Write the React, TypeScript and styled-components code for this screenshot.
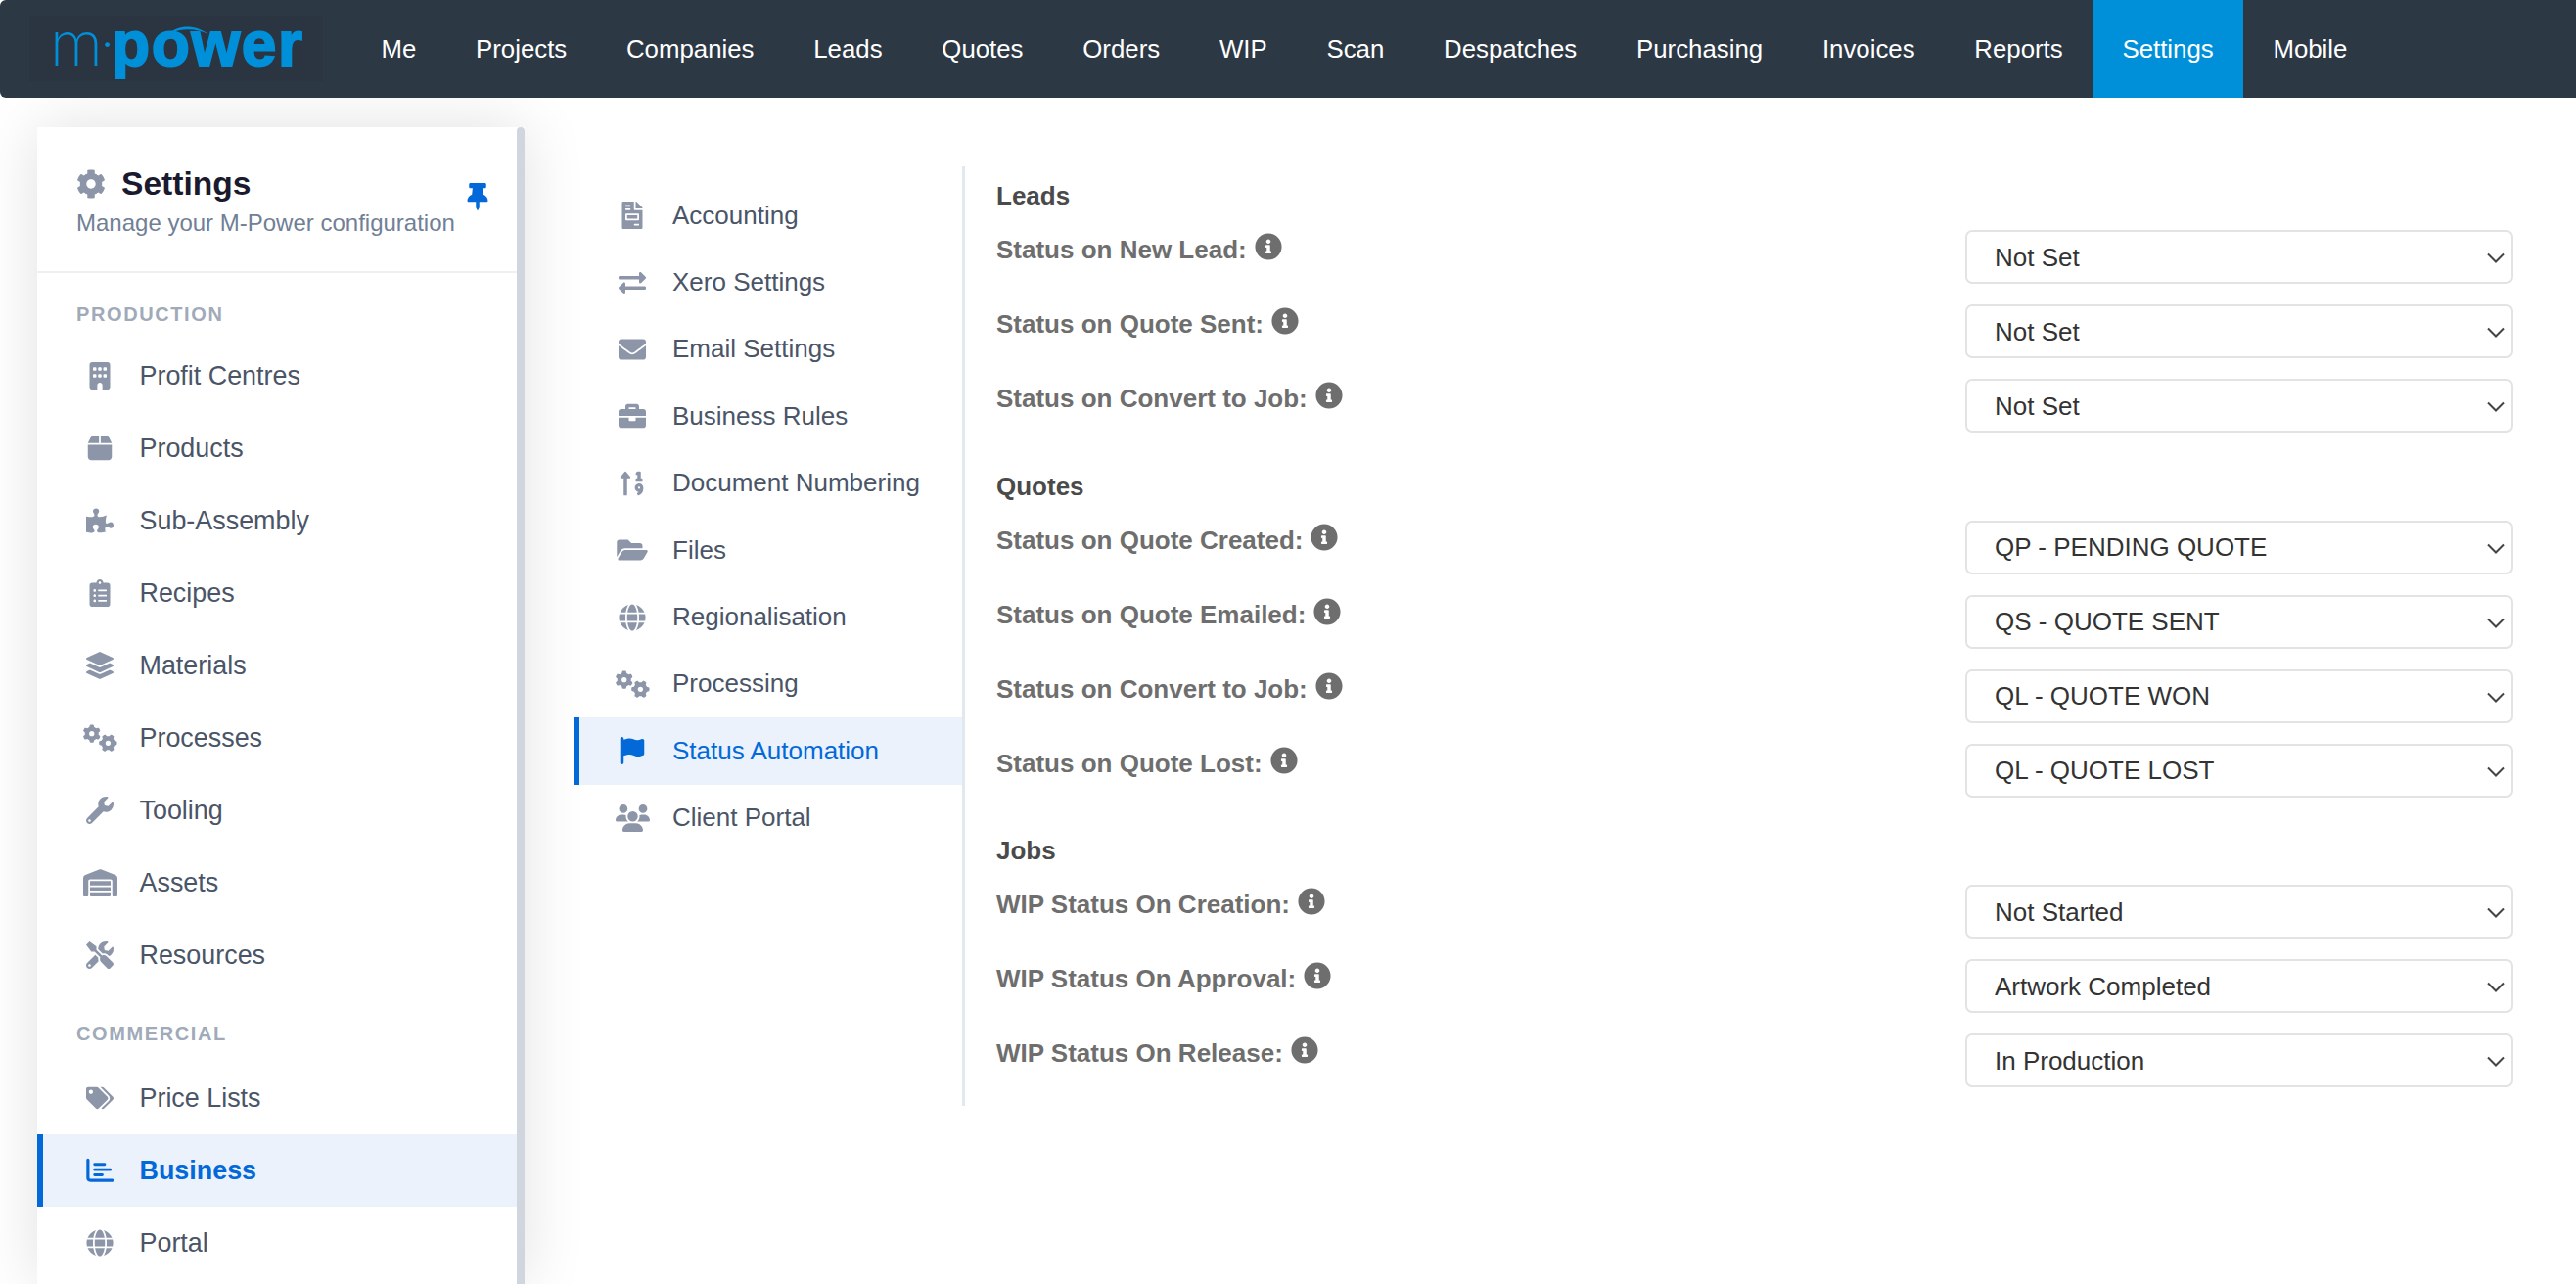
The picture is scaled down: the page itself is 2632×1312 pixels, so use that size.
import { ReactNode } from 'react';
import styled, { createGlobalStyle } from 'styled-components';
import {
  FaBriefcase,
  FaClipboardList,
  FaCog,
  FaEnvelope,
  FaExchangeAlt,
  FaFileInvoice,
  FaFolderOpen,
  FaGlobe,
  FaInfoCircle,
  FaLayerGroup,
  FaPuzzlePiece,
  FaSortNumericUp,
  FaTags,
  FaThumbtack,
  FaTools,
  FaWrench,
} from 'react-icons/fa';
import { FaBox, FaBuilding, FaFlag, FaGears, FaUsers, FaWarehouse } from 'react-icons/fa6';

const ChartIcon = () => (
  <svg viewBox="0 0 512 512" fill="none" stroke="currentColor" strokeLinecap="round" aria-hidden="true">
    <path d="M34 60V395a46 46 0 0 0 46 46H490" strokeWidth="58" />
    <path d="M160 140H345M160 240H450M160 340H300" strokeWidth="54" />
  </svg>
);

type MenuLink = [ReactNode, string, number?];

const navLinks = ['Me', 'Projects', 'Companies', 'Leads', 'Quotes', 'Orders', 'WIP', 'Scan', 'Despatches', 'Purchasing', 'Invoices', 'Reports', 'Settings', 'Mobile'];

const productionLinks: MenuLink[] = [
  [<FaBuilding />, 'Profit Centres'],
  [<FaBox />, 'Products'],
  [<FaPuzzlePiece />, 'Sub-Assembly'],
  [<FaClipboardList />, 'Recipes'],
  [<FaLayerGroup />, 'Materials'],
  [<FaGears />, 'Processes', 35],
  [<FaWrench />, 'Tooling'],
  [<FaWarehouse />, 'Assets', 35],
  [<FaTools />, 'Resources'],
];

const commercialLinks: MenuLink[] = [
  [<FaTags />, 'Price Lists'],
  [<ChartIcon />, 'Business'],
  [<FaGlobe />, 'Portal'],
];

const subLinks: MenuLink[] = [
  [<FaFileInvoice />, 'Accounting'],
  [<FaExchangeAlt />, 'Xero Settings'],
  [<FaEnvelope />, 'Email Settings'],
  [<FaBriefcase />, 'Business Rules'],
  [<FaSortNumericUp />, 'Document Numbering'],
  [<FaFolderOpen />, 'Files', 32],
  [<FaGlobe />, 'Regionalisation'],
  [<FaGears />, 'Processing', 35],
  [<FaFlag />, 'Status Automation'],
  [<FaUsers />, 'Client Portal', 35],
];

const formSections = [
  {
    title: 'Leads',
    rows: [
      ['Status on New Lead:', 'Not Set'],
      ['Status on Quote Sent:', 'Not Set'],
      ['Status on Convert to Job:', 'Not Set'],
    ],
  },
  {
    title: 'Quotes',
    rows: [
      ['Status on Quote Created:', 'QP - PENDING QUOTE'],
      ['Status on Quote Emailed:', 'QS - QUOTE SENT'],
      ['Status on Convert to Job:', 'QL - QUOTE WON'],
      ['Status on Quote Lost:', 'QL - QUOTE LOST'],
    ],
  },
  {
    title: 'Jobs',
    rows: [
      ['WIP Status On Creation:', 'Not Started'],
      ['WIP Status On Approval:', 'Artwork Completed'],
      ['WIP Status On Release:', 'In Production'],
    ],
  },
];

const App = () => {
  return (
    <Page>
      <GlobalStyle />
      <TopNav>
        <LogoBox>
          <LogoLight>m·</LogoLight>
          <LogoBold>power</LogoBold>
          <LogoSwoosh viewBox="0 0 44 12" aria-hidden="true">
            <path d="M0 10C10 1 28 -1 44 11C30 4 14 4 0 10Z" fill="#0090d9" />
          </LogoSwoosh>
        </LogoBox>
        {navLinks.map((link) => (
          <NavLink key={link} $active={link === 'Settings'}>
            {link}
          </NavLink>
        ))}
      </TopNav>
      <Body>
        <Sidebar>
          <SidebarContent>
            <SidebarHeader>
              <SidebarTitle>
                <FaCog />
                Settings
              </SidebarTitle>
              <SidebarSub>Manage your M-Power configuration</SidebarSub>
              <PinIcon>
                <FaThumbtack />
              </PinIcon>
            </SidebarHeader>
            <GroupLabel $top={30} $bottom={14}>PRODUCTION</GroupLabel>
            {productionLinks.map(([icon, label, width]) => (
              <SideItem key={label}>
                <SideIcon $width={width}>{icon}</SideIcon>
                {label}
              </SideItem>
            ))}
            <GroupLabel $top={31} $bottom={17}>COMMERCIAL</GroupLabel>
            {commercialLinks.map(([icon, label, width]) => (
              <SideItem key={label} $active={label === 'Business'}>
                <SideIcon $width={width}>{icon}</SideIcon>
                {label}
              </SideItem>
            ))}
          </SidebarContent>
          <ScrollThumb />
        </Sidebar>
        <SubMenu>
          {subLinks.map(([icon, label, width]) => (
            <SubItem key={label} $active={label === 'Status Automation'}>
              <SideIcon $width={width}>{icon}</SideIcon>
              {label}
            </SubItem>
          ))}
        </SubMenu>
        <FormPanel>
          {formSections.map((section) => (
            <FormSection key={section.title}>
              <SectionTitle>{section.title}</SectionTitle>
              {section.rows.map(([label, value]) => (
                <FormRow key={label}>
                  <FieldLabel>
                    {label}
                    <FaInfoCircle />
                  </FieldLabel>
                  <SelectWrap>
                    <Select defaultValue={value}>
                      <option>{value}</option>
                    </Select>
                    <Chevron viewBox="0 0 18 11" aria-hidden="true">
                      <path d="M1 1.5L9 9.5L17 1.5" />
                    </Chevron>
                  </SelectWrap>
                </FormRow>
              ))}
            </FormSection>
          ))}
        </FormPanel>
      </Body>
    </Page>
  );
};

export default App;

const GlobalStyle = createGlobalStyle`
  html, body {
    margin: 0;
    background: #ffffff;
    font-family: "Liberation Sans", Arial, sans-serif;
  }
`;

const Page = styled.div`
  width: 2632px;
  height: 1312px;
  overflow: hidden;
  background: #ffffff;
`;

const TopNav = styled.nav`
  display: flex;
  align-items: stretch;
  height: 100px;
  background: #2d3845;
  border-radius: 6px 0 0 6px;
  position: relative;
  z-index: 2;
`;

const LogoBox = styled.div`
  position: relative;
  display: flex;
  align-items: baseline;
  width: 300px;
  height: 67px;
  margin: 16px 29px 0 30px;
  padding-left: 21px;
  box-sizing: border-box;
  background: #2b3541;
  line-height: 58px;
  color: #0090d9;
`;

const LogoLight = styled.span`
  font-family: Inter, sans-serif;
  font-weight: 200;
  font-size: 62px;
  letter-spacing: -4px;
`;

const LogoBold = styled.span`
  font-weight: 700;
  font-size: 64px;
  letter-spacing: 1.6px;
  -webkit-text-stroke: 2px #0090d9;
`;

const LogoSwoosh = styled.svg`
  position: absolute;
  left: 142px;
  top: 9px;
  width: 42px;
  height: 11px;
`;

const NavLink = styled.a<{ $active?: boolean }>`
  display: flex;
  align-items: center;
  padding: 0 30.4px;
  font-size: 25.8px;
  color: #ffffff;
  background: ${(p) => (p.$active ? '#0090d9' : 'transparent')};
`;

const Body = styled.div`
  display: flex;
  align-items: flex-start;
  height: 1212px;
`;

const Sidebar = styled.aside`
  display: flex;
  flex: none;
  width: 498px;
  height: 1182px;
  margin: 30px 50px 0 38px;
  background: #ffffff;
  box-shadow: 0 0 60px rgba(0, 0, 0, 0.12);
`;

const SidebarContent = styled.div`
  flex: 1;
  min-width: 0;
`;

const ScrollThumb = styled.div`
  flex: none;
  width: 8px;
  background: #d0d5de;
  border-radius: 4px 4px 0 0;
`;

const SidebarHeader = styled.header`
  position: relative;
  height: 149px;
  box-sizing: border-box;
  padding: 38px 0 0 40px;
  border-bottom: 2px solid #eef0f3;
`;

const SidebarTitle = styled.h1`
  display: flex;
  align-items: center;
  gap: 16px;
  margin: 0;
  font-size: 33.6px;
  line-height: 40px;
  font-weight: 700;
  color: #1a1a2e;

  svg {
    width: 30px;
    height: 30px;
    color: #8d96a8;
  }
`;

const SidebarSub = styled.p`
  margin: 0;
  padding-top: 3px;
  font-size: 24px;
  line-height: 34px;
  color: #718096;
`;

const PinIcon = styled.span`
  position: absolute;
  top: 57px;
  left: 436px;
  color: #0369d9;
  font-size: 28px;
  line-height: 0;
`;

const GroupLabel = styled.div<{ $top: number; $bottom: number }>`
  margin: ${(p) => p.$top}px 0 ${(p) => p.$bottom}px 40px;
  font-size: 20px;
  line-height: 24px;
  font-weight: 700;
  letter-spacing: 1.6px;
  color: #a0aab8;
`;

const SideIcon = styled.span<{ $width?: number }>`
  display: flex;
  flex: none;
  align-items: center;
  justify-content: center;
  width: 48px;
  color: #8d96a8;

  svg {
    width: ${(p) => p.$width ?? 28}px;
    height: 28px;
  }
`;

const SideItem = styled.div<{ $active?: boolean }>`
  display: flex;
  align-items: center;
  gap: 16.5px;
  height: 74px;
  box-sizing: border-box;
  padding-left: 34px;
  border-left: 6px solid ${(p) => (p.$active ? '#0369d9' : 'transparent')};
  font-size: 26.9px;
  font-weight: ${(p) => (p.$active ? 700 : 400)};
  color: ${(p) => (p.$active ? '#0369d9' : '#4a5568')};
  background: ${(p) => (p.$active ? '#ebf2fb' : 'transparent')};

  ${SideIcon} {
    color: ${(p) => (p.$active ? '#0369d9' : '#8d96a8')};
  }
`;

const SubMenu = styled.div`
  flex: none;
  width: 400px;
  height: 960px;
  box-sizing: border-box;
  margin-top: 70px;
  padding-top: 16px;
  border-right: 3px solid #e2e8f0;
`;

const SubItem = styled.div<{ $active?: boolean }>`
  display: flex;
  align-items: center;
  gap: 17px;
  height: 68.4px;
  box-sizing: border-box;
  padding-left: 30px;
  border-left: 6px solid ${(p) => (p.$active ? '#0369d9' : 'transparent')};
  font-size: 26px;
  color: ${(p) => (p.$active ? '#0369d9' : '#4a5568')};
  background: ${(p) => (p.$active ? '#ebf2fb' : 'transparent')};

  ${SideIcon} {
    color: ${(p) => (p.$active ? '#0369d9' : '#8d96a8')};
  }
`;

const FormPanel = styled.div`
  flex: 1;
  margin-top: 70px;
  padding: 15px 64px 0 32px;
`;

const FormSection = styled.section`
  margin-bottom: 28.5px;
`;

const SectionTitle = styled.h3`
  margin: 0 0 10px;
  font-size: 26px;
  line-height: 30px;
  font-weight: 700;
  color: #4a4a4a;
`;

const FormRow = styled.div`
  display: flex;
  justify-content: space-between;
  height: 76px;
`;

const FieldLabel = styled.label`
  display: flex;
  align-items: flex-start;
  padding-top: 15px;
  font-size: 26px;
  line-height: 30px;
  font-weight: 700;
  color: #6e6e6e;

  svg {
    width: 28px;
    height: 28px;
    margin: -2px 0 0 8px;
  }
`;

const SelectWrap = styled.div`
  position: relative;
  width: 560px;
  height: 55px;
  margin-top: 10px;
`;

const Select = styled.select`
  appearance: none;
  width: 100%;
  height: 100%;
  box-sizing: border-box;
  padding: 0 0 0 28px;
  border: 2px solid #e3e3e3;
  border-radius: 7px;
  background: #ffffff;
  font-family: inherit;
  font-size: 26px;
  color: #333333;
`;

const Chevron = styled.svg`
  position: absolute;
  top: 23px;
  right: 9px;
  width: 18px;
  height: 11px;
  fill: none;
  stroke: #444444;
  stroke-width: 2;
`;
